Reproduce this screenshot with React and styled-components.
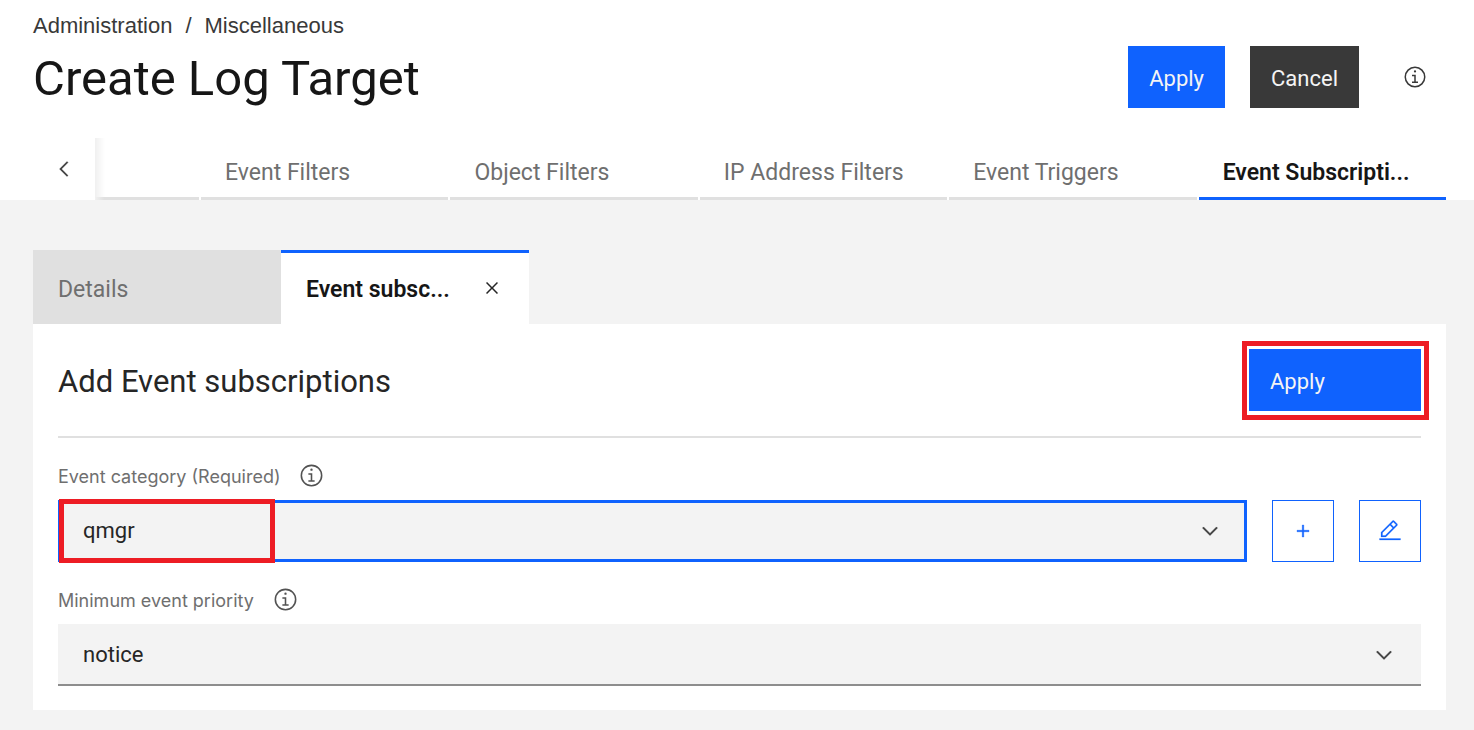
import React, { useState } from "react";
import styled, { createGlobalStyle } from "styled-components";

const Global = createGlobalStyle`
  * { box-sizing: border-box; }
  body {
    margin: 0;
    background: #f3f3f3;
    color: #161616;
    font-family: Roboto, "Liberation Sans", sans-serif;
    font-size: 22px;
    line-height: 28px;
  }
  button, select { font: inherit; color: inherit; border: 0; border-radius: 0; margin: 0; }
  button { cursor: pointer; }
  h1, h2 { margin: 0; font-weight: 400; }
`;

const Header = styled.header`
  background: #fff;
`;

const TitleBar = styled.div`
  display: flex;
  justify-content: space-between;
  align-items: flex-end;
  padding: 13px 28px 30px 33px;
`;

const Breadcrumb = styled.nav`
  display: flex;
  gap: 13px;
  margin-bottom: 11px;
  font-family: "Liberation Sans", Arial, sans-serif;
  font-size: 22px;
  line-height: 26px;
  color: #393939;

  a { color: inherit; text-decoration: none; }
`;

const Title = styled.h1`
  font-size: 49px;
  line-height: 58px;
`;

const Actions = styled.div`
  display: flex;
  gap: 25px;
`;

const Button = styled.button`
  height: 62px;
  min-width: ${(p) => (p.$wide ? "172px" : "0")};
  padding: 3px 21px 0;
  text-align: left;
  color: #f4f4f4;
  background: ${(p) => (p.$kind === "secondary" ? "#393939" : "#0f62fe")};
`;

const IconButton = styled.button`
  display: flex;
  flex: none;
  align-items: center;
  justify-content: center;
  width: 62px;
  height: 62px;
  padding: 0;
  color: ${(p) => (p.$outlined ? "#0f62fe" : "#393939")};
  background: transparent;
  border: ${(p) => (p.$outlined ? "1px solid #0f62fe" : "0")};
`;

const TabStrip = styled.div`
  display: flex;
  padding: 0 28px 0 33px;
`;

const TabList = styled.div`
  display: flex;
  flex: 1;
  gap: 2px;
  min-width: 0;
  background: linear-gradient(to right, #f0f0f0, #fff 10px);
`;

const ClippedTab = styled.div`
  flex: none;
  width: 104px;
  border-bottom: 3px solid #e0e0e0;
  border-image: linear-gradient(to right, #f3f3f3, #e0e0e0 10px) 1;
`;

const Tab = styled.button`
  flex: 1 1 0;
  min-width: 0;
  height: 62px;
  padding: 11px 20px 0 24px;
  white-space: nowrap;
  text-align: left;
  font-size: 23px;
  background: transparent;
  color: ${(p) => (p.$active ? "#161616" : "#6f6f6f")};
  font-weight: ${(p) => (p.$active ? 600 : 400)};
  border-bottom: 3px solid ${(p) => (p.$active ? "#0f62fe" : "#e0e0e0")};
`;

const Main = styled.main`
  padding: 50px 28px 20px 33px;
`;

const PanelTabs = styled.div`
  display: flex;
`;

const PanelTab = styled.div`
  display: flex;
  align-items: center;
  justify-content: space-between;
  width: 248px;
  height: 74px;
  padding: 0 25px;
  background: ${(p) => (p.$active ? "#fff" : "#e0e0e0")};
  border-top: 3px solid ${(p) => (p.$active ? "#0f62fe" : "#e0e0e0")};
`;

const PanelTabLabel = styled.button`
  padding: 2px 0 0;
  white-space: nowrap;
  font-size: 23px;
  background: transparent;
  color: ${(p) => (p.$active ? "#161616" : "#6f6f6f")};
  font-weight: ${(p) => (p.$active ? 600 : 400)};
`;

const CloseButton = styled.button`
  display: flex;
  padding: 0 0 2px;
  color: #262626;
  background: transparent;
`;

const Panel = styled.form`
  padding: 25px 25px 24px;
  background: #fff;
`;

const PanelHeader = styled.div`
  display: flex;
  align-items: center;
  justify-content: space-between;
  padding-bottom: 25px;
  border-bottom: 2px solid #e0e0e0;
`;

const PanelTitle = styled.h2`
  padding-top: 4px;
  font-size: 31px;
  line-height: 40px;
  color: #262626;
`;

const Highlight = styled.span`
  position: absolute;
  inset: ${(p) => p.$inset};
  width: ${(p) => p.$width || "auto"};
  border: 5px solid #ed1c24;
  pointer-events: none;
`;

const HighlightHost = styled.div`
  position: relative;
`;

const Field = styled.div`
  padding-top: 24px;
`;

const FieldLabel = styled.div`
  display: flex;
  align-items: center;
  gap: 19px;
  height: 26px;
  margin-bottom: 12px;
  color: #6f6f6f;
  font-family: Inter, "Liberation Sans", sans-serif;
  font-size: 18px;

  label { padding-top: 3px; }
`;

const InfoButton = styled.button`
  display: flex;
  padding: 0;
  color: #525252;
  background: transparent;
`;

const FieldRow = styled.div`
  display: flex;
  gap: 25px;
`;

const SelectBox = styled.div`
  position: relative;
  display: flex;
  flex: 1;
  align-items: center;
  color: #393939;

  svg {
    position: absolute;
    right: 25px;
    pointer-events: none;
  }
`;

const Select = styled.select`
  width: 100%;
  height: 62px;
  padding: 0 60px 0 25px;
  appearance: none;
  outline: 0;
  color: #262626;
  background: #f3f3f3;
  box-shadow: ${(p) => (p.$focused ? "inset 0 0 0 3px #0f62fe" : "inset 0 -2px 0 #8d8d8d")};
`;

const paths = {
  left: "M10 16L20 6 21.4 7.4 12.8 16 21.4 24.6 20 26z",
  down: "M16 22L6 12 7.4 10.6 16 19.2 24.6 10.6 26 12z",
  close:
    "M24 9.4L22.6 8 16 14.6 9.4 8 8 9.4 14.6 16 8 22.6 9.4 24 16 17.4 22.6 24 24 22.6 17.4 16z",
  add: "M17 15V8h-2v7H8v2h7v7h2v-7h7v-2z",
  edit:
    "M2 26h28v2H2zM25.4 9c.8-.8.8-2 0-2.8l-3.6-3.6c-.8-.8-2-.8-2.8 0l-15 15V24h6.4l15-15zM20.4 4L24 7.6l-3 3L17.4 7l3-3zM6 22v-3.6l10-10 3.6 3.6-10 10H6z",
  info:
    "M17 22V13h-5v2h3v7h-3v2h8v-2zM16 7a1.5 1.5 0 1 0 1.5 1.5A1.5 1.5 0 0 0 16 7zM16 30A14 14 0 1 1 30 16 14 14 0 0 1 16 30zM16 4a12 12 0 1 0 12 12A12 12 0 0 0 16 4z",
};

const strokes = { left: 0.4, down: 0.6, add: 0.5, edit: 0.3 };

function Icon({ name, size = 24 }) {
  return (
    <svg
      width={size}
      height={size}
      viewBox="0 0 32 32"
      fill="currentColor"
      stroke="currentColor"
      strokeWidth={strokes[name] || 0}
      aria-hidden="true"
    >
      <path d={paths[name]} />
    </svg>
  );
}

const tabs = [
  "Event Filters",
  "Object Filters",
  "IP Address Filters",
  "Event Triggers",
  "Event Subscripti...",
];

export default function App() {
  const [active, setActive] = useState(tabs[4]);
  return (
    <>
      <Global />
      <Header>
        <TitleBar>
          <div>
            <Breadcrumb aria-label="Breadcrumb">
              <a href="#administration">Administration</a>
              <span>/</span>
              <a href="#miscellaneous">Miscellaneous</a>
            </Breadcrumb>
            <Title>Create Log Target</Title>
          </div>
          <Actions>
            <Button type="button">Apply</Button>
            <Button type="button" $kind="secondary">Cancel</Button>
            <IconButton type="button" aria-label="Information">
              <Icon name="info" />
            </IconButton>
          </Actions>
        </TitleBar>
        <TabStrip>
          <IconButton type="button" aria-label="Scroll left">
            <Icon name="left" />
          </IconButton>
          <TabList role="tablist">
            <ClippedTab />
            {tabs.map((t) => (
              <Tab
                key={t}
                type="button"
                role="tab"
                aria-selected={t === active}
                $active={t === active}
                onClick={() => setActive(t)}
              >
                {t}
              </Tab>
            ))}
          </TabList>
        </TabStrip>
      </Header>
      <Main>
        <PanelTabs>
          <PanelTab>
            <PanelTabLabel type="button">Details</PanelTabLabel>
          </PanelTab>
          <PanelTab $active>
            <PanelTabLabel type="button" $active>Event subsc...</PanelTabLabel>
            <CloseButton type="button" aria-label="Close tab">
              <Icon name="close" />
            </CloseButton>
          </PanelTab>
        </PanelTabs>
        <Panel onSubmit={(e) => e.preventDefault()}>
          <PanelHeader>
            <PanelTitle>Add Event subscriptions</PanelTitle>
            <HighlightHost>
              <Button type="submit" $wide>Apply</Button>
              <Highlight $inset="-8px -8px -9px -7px" />
            </HighlightHost>
          </PanelHeader>
          <Field>
            <FieldLabel>
              <label htmlFor="category">Event category (Required)</label>
              <InfoButton type="button" aria-label="About event category">
                <Icon name="info" size={25} />
              </InfoButton>
            </FieldLabel>
            <FieldRow>
              <SelectBox>
                <Select id="category" $focused defaultValue="qmgr">
                  <option>qmgr</option>
                </Select>
                <Icon name="down" />
                <Highlight $inset="-1px auto -1px 1px" $width="216px" />
              </SelectBox>
              <IconButton type="button" $outlined aria-label="Add">
                <Icon name="add" />
              </IconButton>
              <IconButton type="button" $outlined aria-label="Edit">
                <Icon name="edit" />
              </IconButton>
            </FieldRow>
          </Field>
          <Field>
            <FieldLabel>
              <label htmlFor="priority">Minimum event priority</label>
              <InfoButton type="button" aria-label="About minimum event priority">
                <Icon name="info" size={25} />
              </InfoButton>
            </FieldLabel>
            <SelectBox>
              <Select id="priority" defaultValue="notice">
                <option>notice</option>
              </Select>
              <Icon name="down" />
            </SelectBox>
          </Field>
        </Panel>
      </Main>
    </>
  );
}
